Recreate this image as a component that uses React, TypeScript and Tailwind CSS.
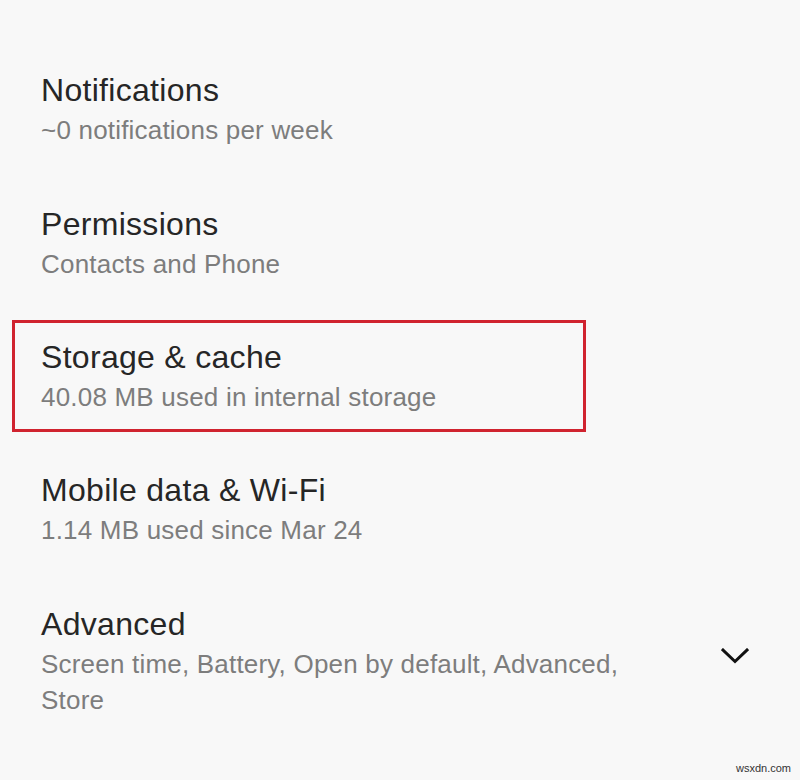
import React from "react"

const font = { fontFamily: '"Liberation Sans", Arial, sans-serif' }

function Item({ title, subtitle }: { title: string; subtitle: string }) {
  return (
    <div>
      <div className="text-[32px] leading-[40px] tracking-[0.3px] text-[#262626]">{title}</div>
      <div className="mt-[2px] text-[26px] leading-[36px] tracking-[0.2px] text-[#7d7d7d]">{subtitle}</div>
    </div>
  )
}

function ChevronDown() {
  return (
    <svg width="28" height="16" viewBox="0 0 28 16" fill="none">
      <path d="M2 2 L14 13.5 L26 2" stroke="#111" strokeWidth="3" strokeLinecap="square" />
    </svg>
  )
}

export default function App() {
  return (
    <div className="relative h-[780px] w-[800px] overflow-hidden bg-[#f8f8f8]" style={font}>
      <div className="flex flex-col pt-[70px]">
        {/* Notifications */}
        <div className="px-[41px]">
          <Item title="Notifications" subtitle="~0 notifications per week" />
        </div>

        {/* Permissions */}
        <div className="mt-[56px] px-[41px]">
          <Item title="Permissions" subtitle="Contacts and Phone" />
        </div>

        {/* Storage, highlighted */}
        <div className="ml-[12px] mt-[38px] w-[574px] border-[3px] border-[#d0232f] py-[14px] pl-[26px]">
          <Item title="Storage & cache" subtitle="40.08 MB used in internal storage" />
        </div>

        {/* Mobile data */}
        <div className="mt-[38px] px-[41px]">
          <Item title="Mobile data & Wi-Fi" subtitle="1.14 MB used since Mar 24" />
        </div>

        {/* Advanced */}
        <div className="mt-[56px] flex items-center justify-between px-[41px]">
          <div className="w-[620px]">
            <Item
              title="Advanced"
              subtitle="Screen time, Battery, Open by default, Advanced, Store"
            />
          </div>
          <div className="mr-[10px] mb-[10px]">
            <ChevronDown />
          </div>
        </div>
      </div>

      <div className="absolute bottom-[4px] right-[9px] text-[11px] text-[#333]">wsxdn.com</div>
    </div>
  )
}
